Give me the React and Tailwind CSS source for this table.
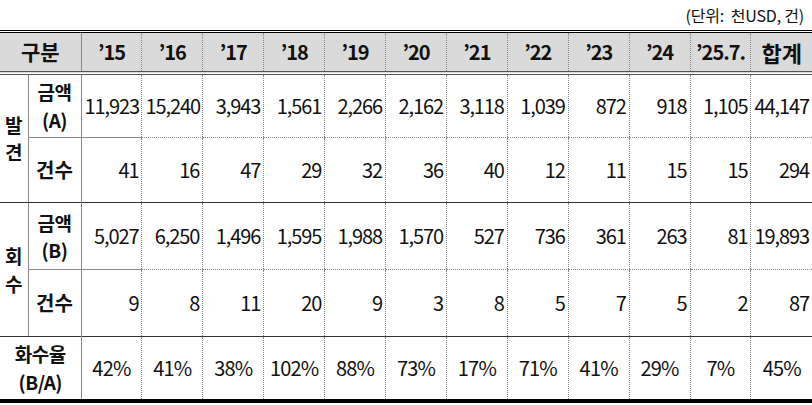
import React from 'react';

const years = ['’15', '’16', '’17', '’18', '’19', '’20', '’21', '’22', '’23', '’24', '’25.7.'];

const rows = {
    foundAmount: ['11,923', '15,240', '3,943', '1,561', '2,266', '2,162', '3,118', '1,039', '872', '918', '1,105', '44,147'],
    foundCount: ['41', '16', '47', '29', '32', '36', '40', '12', '11', '15', '15', '294'],
    recAmount: ['5,027', '6,250', '1,496', '1,595', '1,988', '1,570', '527', '736', '361', '263', '81', '19,893'],
    recCount: ['9', '8', '11', '20', '9', '3', '8', '5', '7', '5', '2', '87'],
    rate: ['42%', '41%', '38%', '102%', '88%', '73%', '17%', '71%', '41%', '29%', '7%', '45%'],
};

const font = { fontFamily: '"Noto Sans CJK KR", "Noto Sans", sans-serif' };

const num = 'px-[3px] text-right tracking-[-1.1px]';
const dataCell = `border-l border-dotted border-l-[#888] ${num}`;
const twoLine = 'text-center font-bold text-[19px] leading-[27.5px] tracking-[-0.5px] border-r border-r-[#888]';
const sideLabel = 'text-center font-bold text-[19px] leading-[27.5px] border-r border-r-[#888] border-b border-b-[#333]';

const App = () => {
    return (
        <div className="w-[812px] h-[405px] bg-white text-[#111]" style={font}>
            <div className="h-[30px] flex items-center justify-end pr-[8px] text-[16px] tracking-[-0.2px]">
                (단위:&nbsp; 천USD, 건)
            </div>
            <table className="w-full table-fixed border-collapse text-[20px] leading-none">
                <colgroup>
                    <col className="w-[28px]" />
                    <col className="w-[53px]" />
                    {years.map((y) => (
                        <col key={y} />
                    ))}
                    <col />
                </colgroup>
                <thead>
                    <tr className="h-[41px] bg-[#dadada] border-t-[3px] border-t-black border-b-[4px] border-double border-b-[#555] font-bold">
                        <th colSpan={2} className="text-center text-[21px] border-r border-r-[#888]">
                            구분
                        </th>
                        {years.map((y, i) => (
                            <th
                                key={y}
                                className={`text-center tracking-[-1px] border-dotted border-l-[#888] ${i === 0 ? '' : 'border-l'}`}
                            >
                                {y}
                            </th>
                        ))}
                        <th className="text-center border-l border-dotted border-l-[#888] text-[22px]">합계</th>
                    </tr>
                </thead>
                <tbody>
                    <tr className="h-[65px]">
                        <td rowSpan={2} className={sideLabel}>
                            발<br />견
                        </td>
                        <td className={`${twoLine} border-b border-b-[#888]`}>
                            금액<br />(A)
                        </td>
                        {rows.foundAmount.map((v, i) => (
                            <td key={i} className={`${i === 0 ? num : dataCell} border-b border-b-[#888]`}>
                                {v}
                            </td>
                        ))}
                    </tr>
                    <tr className="h-[65px] border-b border-b-[#333]">
                        <td className="text-center font-bold border-r border-r-[#888]">건수</td>
                        {rows.foundCount.map((v, i) => (
                            <td key={i} className={i === 0 ? num : dataCell}>
                                {v}
                            </td>
                        ))}
                    </tr>
                    <tr className="h-[67px]">
                        <td rowSpan={2} className={sideLabel}>
                            회<br />수
                        </td>
                        <td className={`${twoLine} border-b border-b-[#888]`}>
                            금액<br />(B)
                        </td>
                        {rows.recAmount.map((v, i) => (
                            <td key={i} className={`${i === 0 ? num : dataCell} border-b border-b-[#888]`}>
                                {v}
                            </td>
                        ))}
                    </tr>
                    <tr className="h-[67px] border-b border-b-[#333]">
                        <td className="text-center font-bold border-r border-r-[#888]">건수</td>
                        {rows.recCount.map((v, i) => (
                            <td key={i} className={i === 0 ? num : dataCell}>
                                {v}
                            </td>
                        ))}
                    </tr>
                    <tr className="h-[64px] border-b-[4px] border-b-black">
                        <td colSpan={2} className={twoLine}>
                            화수율<br />(B/A)
                        </td>
                        {rows.rate.map((v, i) => (
                            <td
                                key={i}
                                className={`text-center tracking-[-0.8px] ${i === 0 ? '' : 'border-l border-dotted border-l-[#888]'}`}
                            >
                                {v}
                            </td>
                        ))}
                    </tr>
                </tbody>
            </table>
        </div>
    );
};

export default App;
